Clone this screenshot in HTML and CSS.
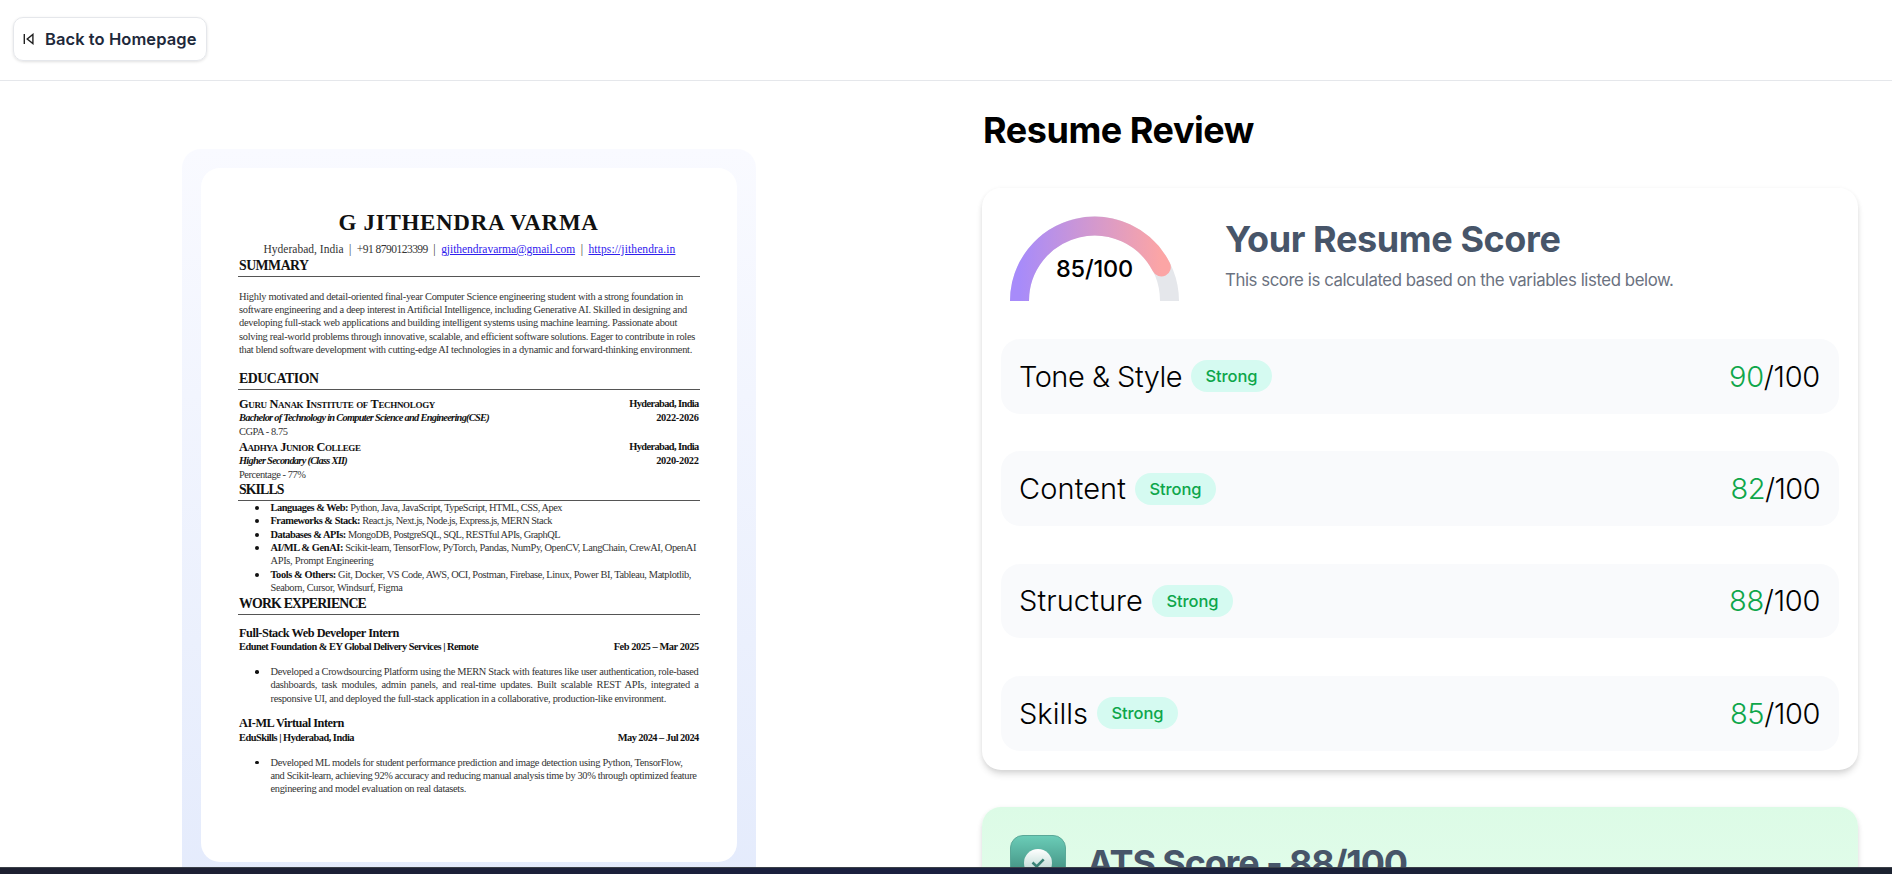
FILE: index.html
```html
<!DOCTYPE html>
<html lang="en">
<head>
<meta charset="utf-8">
<title>Resume Review</title>
<link rel="stylesheet" href="styles.css">
</head>
<body>
<nav class="topbar">
  <a class="back">
    <svg class="back-icon" width="12" height="12" viewBox="0 0 12 12" fill="none" stroke="#222" stroke-width="1.4"><path d="M1.3 .9v10.2M9.9 1.4v9.2L4.2 6z"/></svg>
    <span data-w="151.5">Back to Homepage</span>
  </a>
</nav>
<main class="columns">
  <section class="preview">
    <article class="sheet">
      <h1 class="name"><span data-w="260">G JITHENDRA VARMA</span></h1>
      <p class="contact"><span data-w="80">Hyderabad, India</span><span>|</span><span data-w="71">+91 8790123399</span><span>|</span><a data-w="134">gjithendravarma@gmail.com</a><span>|</span><a data-w="87">https://jithendra.in</a></p>

      <h2 class="head"><span data-w="69.5">SUMMARY</span></h2>
      <p class="summary">
        <span data-w="444">Highly motivated and detail-oriented final-year Computer Science engineering student with a strong foundation in</span>
        <span data-w="448">software engineering and a deep interest in Artificial Intelligence, including Generative AI. Skilled in designing and</span>
        <span data-w="438">developing full-stack web applications and building intelligent systems using machine learning. Passionate about</span>
        <span data-w="456">solving real-world problems through innovative, scalable, and efficient software solutions. Eager to contribute in roles</span>
        <span data-w="453">that blend software development with cutting-edge AI technologies in a dynamic and forward-thinking environment.</span>
      </p>

      <h2 class="head education"><span data-w="79.5">EDUCATION</span></h2>
      <div class="row first"><b class="school" data-w="196">Guru Nanak Institute of Technology</b><b data-w="69.5">Hyderabad, India</b></div>
      <div class="row degree"><b class="italic" data-w="250">Bachelor of Technology in Computer Science and Engineering(CSE)</b><b data-w="42.5">2022-2026</b></div>
      <p class="grade"><span data-w="48.5">CGPA - 8.75</span></p>
      <div class="row second"><b class="school" data-w="121.5">Aadhya Junior College</b><b data-w="69.5">Hyderabad, India</b></div>
      <div class="row"><b class="italic" data-w="108">Higher Secondary (Class XII)</b><b data-w="42.5">2020-2022</b></div>
      <p class="grade"><span data-w="66.5">Percentage - 77%</span></p>

      <h2 class="head skills"><span data-w="44.5">SKILLS</span></h2>
      <ul class="list">
        <li><span data-w="291.5"><b>Languages &amp; Web:</b> Python, Java, JavaScript, TypeScript, HTML, CSS, Apex</span></li>
        <li><span data-w="281.5"><b>Frameworks &amp; Stack:</b> React.js, Next.js, Node.js, Express.js, MERN Stack</span></li>
        <li><span data-w="289.5"><b>Databases &amp; APIs:</b> MongoDB, PostgreSQL, SQL, RESTful APIs, GraphQL</span></li>
        <li><span data-w="425.5"><b>AI/ML &amp; GenAI:</b> Scikit-learn, TensorFlow, PyTorch, Pandas, NumPy, OpenCV, LangChain, CrewAI, OpenAI</span>
          <span data-w="103">APIs, Prompt Engineering</span></li>
        <li><span data-w="420.5"><b>Tools &amp; Others:</b> Git, Docker, VS Code, AWS, OCI, Postman, Firebase, Linux, Power BI, Tableau, Matplotlib,</span>
          <span data-w="132">Seaborn, Cursor, Windsurf, Figma</span></li>
      </ul>

      <h2 class="head work"><span data-w="127">WORK EXPERIENCE</span></h2>
      <h3 class="role"><span data-w="160">Full-Stack Web Developer Intern</span></h3>
      <div class="row"><b data-w="239">Edunet Foundation &amp; EY Global Delivery Services | Remote</b><b data-w="85">Feb 2025 – Mar 2025</b></div>
      <ul class="list small">
        <li><span data-w="428">Developed a Crowdsourcing Platform using the MERN Stack with features like user authentication, role-based</span>
          <span class="wide">dashboards, task modules, admin panels, and real-time updates. Built scalable REST APIs, integrated a</span>
          <span data-w="395.5">responsive UI, and deployed the full-stack application in a collaborative, production-like environment.</span></li>
      </ul>
      <h3 class="role second-role"><span data-w="105">AI-ML Virtual Intern</span></h3>
      <div class="row"><b data-w="115">EduSkills | Hyderabad, India</b><b data-w="81">May 2024 – Jul 2024</b></div>
      <ul class="list small">
        <li><span data-w="412">Developed ML models for student performance prediction and image detection using Python, TensorFlow,</span>
          <span data-w="426">and Scikit-learn, achieving 92% accuracy and reducing manual analysis time by 30% through optimized feature</span>
          <span data-w="195.5">engineering and model evaluation on real datasets.</span></li>
      </ul>
    </article>
  </section>

  <section class="review">
    <h2 class="title"><span data-w="271">Resume Review</span></h2>
    <div class="card">
      <div class="score">
        <div class="gauge">
          <svg width="169" height="85" viewBox="0 0 169 85" fill="none" stroke-width="19">
            <defs><linearGradient id="arc" x1="0" y1="0" x2="1" y2="0"><stop offset="0" stop-color="#a78bfa"/><stop offset="1" stop-color="#fca5a5"/></linearGradient></defs>
            <path d="M9.5 85a75 75 0 0 1 150 0" stroke="#e5e7eb"/>
            <path d="M9.5 85A75 75 0 0 1 151.3 51" stroke="url(#arc)" stroke-linecap="round"/>
          </svg>
          <span class="gauge-value"><span data-w="77">85/100</span></span>
        </div>
        <div class="score-text">
          <h3 class="big"><span data-w="335.5">Your Resume Score</span></h3>
          <p class="note"><span data-w="448.5">This score is calculated based on the variables listed below.</span></p>
        </div>
      </div>
      <div class="metrics">
        <div class="metric"><span class="label" data-w="163">Tone &amp; Style</span><span class="badge"><span data-w="52">Strong</span></span><span class="points" data-w="91"><i>90</i>/100</span></div>
        <div class="metric"><span class="label" data-w="107">Content</span><span class="badge"><span data-w="52">Strong</span></span><span class="points" data-w="89.5"><i>82</i>/100</span></div>
        <div class="metric"><span class="label" data-w="124">Structure</span><span class="badge"><span data-w="52">Strong</span></span><span class="points" data-w="91"><i>88</i>/100</span></div>
        <div class="metric"><span class="label" data-w="69">Skills</span><span class="badge"><span data-w="52">Strong</span></span><span class="points" data-w="90"><i>85</i>/100</span></div>
      </div>
    </div>
    <div class="ats">
      <svg class="shield" width="56" height="56" viewBox="0 0 56 56">
        <defs>
          <linearGradient id="tile" x1="0" y1="0" x2="0" y2="1"><stop offset="0" stop-color="#6bcdb8"/><stop offset="1" stop-color="#2f7468"/></linearGradient>
          <linearGradient id="seal" x1="0" y1="0" x2="0" y2="1"><stop offset="0" stop-color="#fff"/><stop offset="1" stop-color="#a9cfc8"/></linearGradient>
        </defs>
        <rect x=".5" y=".5" width="55" height="55" rx="12.5" fill="url(#tile)" stroke="#5aa898"/>
        <circle cx="28" cy="28" r="14" fill="url(#seal)"/>
        <path d="M22.5 27.5l4.2 4 7-7.2" fill="none" stroke="#3a8377" stroke-width="2.6"/>
      </svg>
      <h3 class="big"><span data-w="320">ATS Score - 88/100</span></h3>
    </div>
  </section>
</main>
<div class="dock"></div>
<script src="fit.js"></script>
</body>
</html>
```
FILE: styles.css
```css
* { box-sizing: border-box; margin: 0; padding: 0; }
html, body { height: 874px; overflow: hidden; }
body { background: #fff; font-family: Inter, "Liberation Sans", sans-serif; color: #000; }
span, b { white-space: nowrap; }

.topbar { height: 81px; padding: 17px 13px; border-bottom: 1px solid #e5e7eb; }
.back { display: flex; align-items: center; gap: 10px; width: 194px; height: 44px; padding-left: 9px;
  border: 1px solid #e5e7eb; border-radius: 10px; box-shadow: 0 1px 3px rgba(0,0,0,.12);
  font-size: 16.5px; font-weight: 600; color: #1e293b; }
.back-icon { flex: none; }

.columns { display: grid; grid-template-columns: 982px 876px; height: 793px; overflow: hidden; }

.preview { width: 574px; height: 740px; margin: 68px 0 0 182px; padding: 19px; border-radius: 19px 19px 0 0;
  background: linear-gradient(#f9faff, #e4ebfc); }
.sheet { height: 694px; padding: 41.8px 38.3px 0 37.5px; border-radius: 19px; background: #fff; color: #333;
  font: 10.4px/13.33px "Liberation Serif", serif; }
.sheet b, .sheet h1, .sheet h2, .sheet h3 { color: #111; }
.sheet a { color: #2f20ee; text-decoration: underline; }
.name { font-size: 23px; line-height: 26px; text-align: center; color: #000; }
.contact { display: flex; justify-content: space-between; width: 412px; margin: 5px 0 0 25px; font-size: 11.5px; line-height: 16px; }
.head { margin-right: -1px; margin-left: -.5px; padding: 0 0 2.2px 1px; border-bottom: 1px solid #555; font-size: 13.8px; line-height: 16px; }
.contact + .head { margin-top: .9px; }
.summary { margin-top: 12.9px; }
.summary span, .list span { display: block; }
.sheet .summary, .sheet .row, .sheet .role, .sheet .grade { padding-left: .5px; }
.education { margin-top: 14.8px; }
.row { display: flex; justify-content: space-between; line-height: 14px; }
.row.first { margin-top: 6.3px; }
.row.degree { margin-top: .3px; }
.row.second { margin-top: 1.2px; }
.school { font-size: 12.3px; font-variant: small-caps; }
.italic { font-style: italic; }
.skills { margin-top: .9px; }
.list { padding-left: 32px; list-style: none; }
.list li { position: relative; }
.list li::before { content: ""; position: absolute; left: -15.5px; top: 5px; width: 4px; height: 4px; border-radius: 50%; background: #111; }
.list.small { margin-top: 10.6px; }
.list.small li::before { width: 3.5px; height: 3.5px; }
.list .wide { width: 428px; text-align: justify; text-align-last: justify; white-space: normal; letter-spacing: -.25px; }
.work { margin-top: 1.4px; }
.role { margin-top: 9.9px; font-size: 12.3px; line-height: 16px; }
.role + .row { margin-top: -.2px; }
.second-role { margin-top: 10.2px; }

.title { margin-top: 26px; padding-left: 1px; font-size: 36px; font-weight: 700; line-height: 46px; }
.card { height: 582px; margin-top: 35px; padding: 28px 19px 0; border-radius: 19px; box-shadow: 0 5px 7px -1px rgba(0,0,0,.14), 0 1px 5px rgba(0,0,0,.06); }
.score { display: flex; align-items: flex-start; gap: 46px; padding-left: 9px; height: 123px; }
.gauge { display: grid; width: 169px; height: 85px; }
.gauge svg, .gauge-value { grid-area: 1 / 1; }
.gauge-value { justify-self: center; padding-top: 38px; font-size: 23.5px; line-height: 30px; font-weight: 500; }
.big { font-size: 36px; font-weight: 700; line-height: 44px; color: #475569; }
.score .big { padding-top: 1px; }
.note { margin-top: 6px; font-size: 16.8px; line-height: 26px; color: #6b7280; }
.metrics { display: flex; flex-direction: column; gap: 37.6px; }
.metric { display: flex; align-items: center; height: 74.7px; padding: 0 19px 0 18px; border-radius: 19px; background: #f9fafc; font-size: 29px; font-weight: 300; }
.badge { display: flex; justify-content: center; align-items: center; width: 81px; height: 32px; margin-left: 9px; border-radius: 16px;
  background: #d5faf1; color: #0da64b; font-size: 16.5px; font-weight: 500; }
.points { margin-left: auto; }
.points i { font-style: normal; color: #0fa64a; }

.ats { display: flex; gap: 21px; height: 120px; margin-top: 37px; padding: 28px; border-radius: 19px;
  background: linear-gradient(#dcfbe6, #e4fdec); box-shadow: 0 5px 7px -1px rgba(0,0,0,.14), 0 1px 5px rgba(0,0,0,.06); }
.ats .big { padding-top: 6px; }

.dock { position: fixed; left: 0; right: 0; bottom: 0; height: 7px; border-top: 1px solid #3b4048; background: linear-gradient(90deg, #1d2030, #1a2040 50%, #1c2230); }
```
FILE: fit.js
```js
// Tracks each marked line so that it fills its set width.
for (const el of document.querySelectorAll("[data-w]")) {
  const range = document.createRange();
  const block = getComputedStyle(el).display === "block" && el.tagName === "SPAN";
  if (block) el.style.display = "inline-block";
  range.selectNodeContents(el);
  const natural = range.getBoundingClientRect().width;
  if (block) el.style.display = "";
  el.style.letterSpacing = (parseFloat(el.dataset.w) - natural) / el.textContent.length + "px";
}
```
